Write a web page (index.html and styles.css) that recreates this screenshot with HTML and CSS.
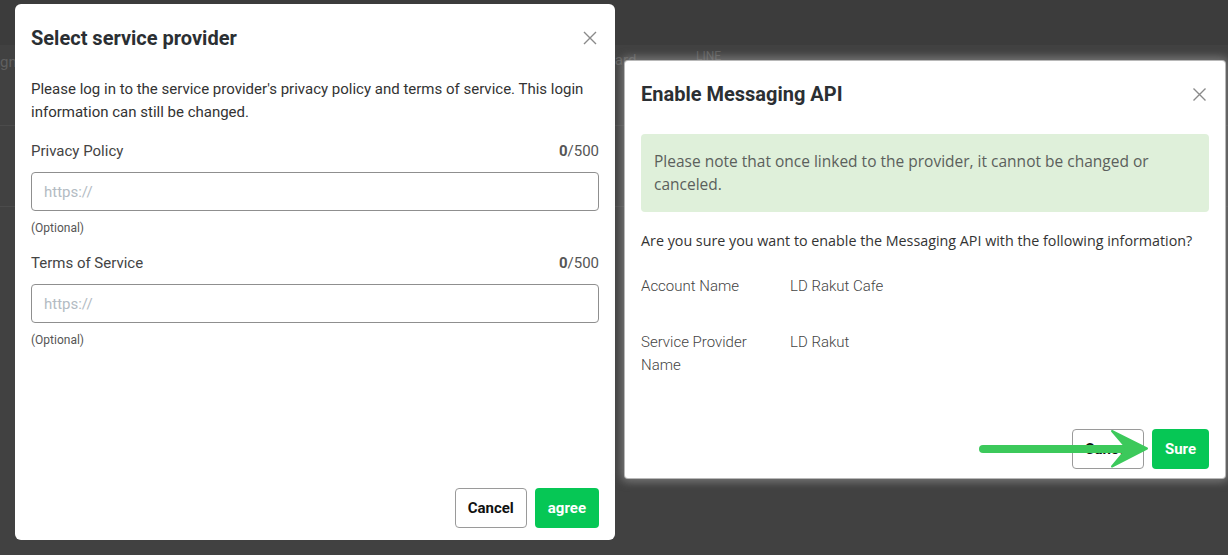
FILE: index.html
```html
<!DOCTYPE html>
<html lang="en">
<head>
    <meta charset="UTF-8">
    <meta name="viewport" content="width=device-width, initial-scale=1.0">
    <title>Messaging API settings</title>
    <link rel="stylesheet" href="styles.css">
</head>
<body>
    <!-- Page behind the dialogs (dimmed) -->
    <div class="page">
        <div class="page-head">
            <span class="page-crumb">gn</span>
            <span class="page-crumb page-crumb-mid">Stard</span>
            <span class="page-crumb page-crumb-right">LINE</span>
        </div>
        <div class="page-row"></div>
        <div class="page-row"></div>
    </div>

    <!-- Select service provider -->
    <div class="modal modal-provider">
        <div class="modal-head">
            <h2 class="modal-title">Select service provider</h2>
            <span class="close">
                <svg width="14" height="14" viewBox="0 0 14 14"><path d="M1 1L13 13M13 1L1 13" stroke="#8a8a8a" stroke-width="1.4" fill="none"/></svg>
            </span>
        </div>

        <p class="modal-text">Please log in to the service provider's privacy policy and terms of service. This login information can still be changed.</p>

        <div class="field">
            <div class="field-label">
                <span>Privacy Policy</span>
                <span class="counter"><b>0</b>/500</span>
            </div>
            <input type="text" class="field-input" placeholder="https://">
            <div class="field-hint">(Optional)</div>
        </div>

        <div class="field">
            <div class="field-label">
                <span>Terms of Service</span>
                <span class="counter"><b>0</b>/500</span>
            </div>
            <input type="text" class="field-input" placeholder="https://">
            <div class="field-hint">(Optional)</div>
        </div>

        <div class="modal-foot">
            <button class="btn btn-outline">Cancel</button>
            <button class="btn btn-green">agree</button>
        </div>
    </div>

    <!-- Enable Messaging API -->
    <div class="modal modal-api">
        <div class="modal-head">
            <h2 class="modal-title">Enable Messaging API</h2>
            <span class="close">
                <svg width="13" height="13" viewBox="0 0 13 13"><path d="M0.5 0.5L12.5 12.5M12.5 0.5L0.5 12.5" stroke="#8a8a8a" stroke-width="1.4" fill="none"/></svg>
            </span>
        </div>

        <div class="note">Please note that once linked to the provider, it cannot be changed or canceled.</div>

        <p class="confirm-text">Are you sure you want to enable the Messaging API with the following information?</p>

        <div class="info">
            <div class="info-label">Account Name</div>
            <div class="info-value">LD Rakut Cafe</div>
            <div class="info-label">Service Provider Name</div>
            <div class="info-value">LD Rakut</div>
        </div>

        <div class="modal-foot modal-foot-tight">
            <button class="btn btn-outline">Cancel</button>
            <button class="btn btn-green">Sure</button>
        </div>
    </div>

    <!-- pointer to the confirm button -->
    <svg class="pointer-arrow" width="175" height="46" viewBox="0 0 175 46">
        <line x1="5" y1="23" x2="146" y2="23" stroke="#3cc95b" stroke-width="8" stroke-linecap="round"/>
        <path d="M134 5L169 22.5L134 40.5L149 22.5Z" fill="#3cc95b" stroke="#3cc95b" stroke-width="2" stroke-linejoin="round"/>
    </svg>
</body>
</html>
```

FILE: styles.css
```css
body {
    font-family: Roboto, "Liberation Sans", sans-serif;
    background-color: #414141;
    margin: 0;
    padding: 0;
    height: 555px;
    overflow: hidden;
}

/* Dimmed page */
.page {
    color: #5f5f5f;
    font-size: 15px;
}

.page-head {
    height: 45px;
    background-color: #3c3c3c;
    position: relative;
}

.page-crumb {
    position: absolute;
    top: 53px;
    left: 0;
}

.page-crumb-mid {
    left: 601px;
    top: 51px;
}

.page-crumb-right {
    left: 696px;
    top: 49px;
    font-size: 12px;
}

.page-row {
    height: 80px;
    border-bottom: 1px solid #4b4b4b;
}

.page-row:first-of-type {
    margin-top: 10px;
}

/* Modals */
.modal {
    position: absolute;
    width: 600px;
    box-sizing: border-box;
    background-color: #ffffff;
    padding: 0 16px;
    display: flex;
    flex-direction: column;
    color: #333;
}

.modal-provider {
    left: 15px;
    top: 4px;
    height: 536px;
    border-radius: 6px;
}

.modal-api {
    left: 625px;
    top: 61px;
    height: 417px;
    border-radius: 3px;
    box-shadow: 0 0 0 1px #b8b8b8, 0 0 9px 4px rgba(160, 160, 160, 0.55);
}

.modal-head {
    display: flex;
    justify-content: space-between;
    align-items: center;
    padding-top: 20px;
}

.modal-api .modal-head {
    padding-top: 19px;
}

.modal-title {
    margin: 0;
    font-size: 20px;
    line-height: 28px;
    font-weight: 700;
    color: #2b2f33;
}

.close {
    display: flex;
    margin-right: 2px;
    cursor: pointer;
}

.modal-api .close {
    margin-right: 3px;
}

.modal-text {
    margin: 26px 0 0;
    font-size: 15px;
    line-height: 23px;
    color: #333;
}

/* Fields */
.field {
    margin-top: 17px;
}

.field-label {
    display: flex;
    justify-content: space-between;
    font-size: 15px;
    line-height: 20px;
    color: #444;
}

.counter {
    color: #555;
}

.field-input {
    display: block;
    width: 100%;
    box-sizing: border-box;
    height: 39px;
    margin-top: 11px;
    padding: 0 12px;
    border: 1px solid #8f8f8f;
    border-radius: 4px;
    font-family: inherit;
    font-size: 15px;
    color: #333;
}

.field-input::placeholder {
    color: #b3bbc3;
}

.field-hint {
    margin-top: 9px;
    font-size: 12px;
    line-height: 16px;
    color: #555;
}

/* Footer buttons */
.modal-foot {
    margin-top: auto;
    display: flex;
    justify-content: flex-end;
    gap: 8px;
    padding-bottom: 12px;
}

.modal-foot-tight {
    padding-bottom: 9px;
}

.btn {
    height: 40px;
    padding: 0 12px;
    border-radius: 4px;
    font-family: inherit;
    font-size: 15px;
    font-weight: 700;
    cursor: pointer;
}

.btn-outline {
    background-color: #ffffff;
    border: 1px solid #9a9a9a;
    color: #111;
}

.btn-green {
    padding: 0 13px;
    background-color: #06c755;
    border: none;
    color: #ffffff;
}

/* Messaging API dialog */
.note {
    margin-top: 26px;
    padding: 16px 13px;
    height: 78px;
    box-sizing: border-box;
    background-color: #dff0da;
    border-radius: 4px;
    font-family: "Open Sans", sans-serif;
    font-size: 15.5px;
    line-height: 23px;
    color: #5b605c;
}

.confirm-text {
    margin: 17px 0 0;
    font-family: "Open Sans", sans-serif;
    font-size: 14.3px;
    line-height: 23px;
    color: #333;
}

.info {
    display: grid;
    grid-template-columns: 149px 1fr;
    row-gap: 33px;
    margin-top: 23px;
    font-size: 15px;
    line-height: 23px;
    font-weight: 300;
    color: #444;
}

.info-label {
    max-width: 125px;
}

.pointer-arrow {
    position: absolute;
    left: 978px;
    top: 426px;
}
```
